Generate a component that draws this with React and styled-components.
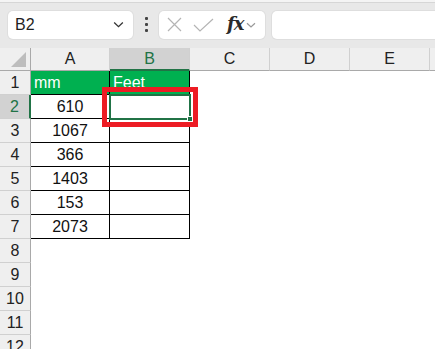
import React from 'react';
import styled, { createGlobalStyle } from 'styled-components';

const GlobalStyle = createGlobalStyle`
    html, body {
        margin: 0;
        padding: 0;
        background: #ffffff;
        overflow: hidden;
    }
    body {
        font-family: "Liberation Sans", Arial, sans-serif;
    }
`

const Page = styled.div`
    width: 435px;
    height: 349px;
    position: relative;
    overflow: hidden;
    background: #fff;
`

const TopEdge = styled.div`
    height: 2px;
    background: #f4f4f4;
    border-bottom: 1px solid #d6d6d6;
`

const Toolbar = styled.div`
    height: 45px;
    background: #e8e8e8;
    display: flex;
    align-items: center;
    padding-left: 8px;
    box-sizing: border-box;
    padding-bottom: 2px;
`

const Box = styled.div`
    height: 28px;
    background: #fff;
    border-radius: 5px;
    box-shadow: 0 0 0 1px #dedede;
    display: flex;
    align-items: center;
    box-sizing: border-box;
`

const NameBox = styled(Box)`
    width: 125px;
    padding: 0 8px 0 7px;
    justify-content: space-between;
    font-size: 16px;
    color: #1f1f1f;
`

const Dots = styled.div`
    width: 26px;
    display: flex;
    flex-direction: column;
    align-items: center;
    gap: 3px;

    & span {
        width: 3px;
        height: 3px;
        background: #444;
        border-radius: 1px;
    }
`

const FxBox = styled(Box)`
    width: 106px;
    padding: 0 3px 0 8px;
    gap: 11px;
`

const FxGroup = styled.span`
    display: flex;
    align-items: center;
    gap: 2px;
    margin-left: 2px;
`

const Fx = styled.span`
    font-family: "DejaVu Serif", "Liberation Serif", serif;
    font-style: italic;
    font-weight: bold;
    font-size: 18px;
    line-height: 22px;
    color: #2b2b2b;
    letter-spacing: -1px;
    margin-top: -2px;
`

const FormulaInput = styled(Box)`
    flex: 1;
    margin-left: 7px;
    border-radius: 5px 0 0 5px;
`

const Sheet = styled.div`
    display: grid;
    grid-template-columns: 31px 79px 80px 80px 80px 80px 1fr;
    grid-auto-rows: 24px;
    grid-template-rows: 23px;
`

const Corner = styled.div`
    background: #efefef;
    border-right: 1px solid #a9a9a9;
    border-bottom: 1px solid #a9a9a9;
    box-sizing: border-box;
    position: relative;

    &::after {
        content: '';
        position: absolute;
        right: 4px;
        bottom: 3px;
        width: 0;
        height: 0;
        border-left: 15px solid transparent;
        border-bottom: 15px solid #bdbdbd;
    }
`

const ColHead = styled.div`
    background: ${p => (p.$active ? '#d2d2d2' : '#efefef')};
    color: ${p => (p.$active ? '#217346' : '#222')};
    border-right: 1px solid #d0d0d0;
    border-bottom: ${p => (p.$active ? '2px solid #217346' : '1px solid #a9a9a9')};
    box-sizing: border-box;
    display: flex;
    align-items: center;
    justify-content: center;
    font-size: 16px;
    padding-top: ${p => (p.$active ? '1px' : '0')};
`

const RowHead = styled.div`
    background: ${p => (p.$active ? '#d2d2d2' : '#efefef')};
    color: ${p => (p.$active ? '#217346' : '#222')};
    border-right: ${p => (p.$active ? '2px solid #217346' : '1px solid #a9a9a9')};
    border-bottom: 1px solid #d0d0d0;
    box-sizing: border-box;
    display: flex;
    align-items: center;
    justify-content: center;
    font-size: 16px;
    padding-top: 1px;
`

const Cell = styled.div`
    box-sizing: border-box;
    background: ${p => (p.$head ? '#00b050' : '#fff')};
    color: ${p => (p.$head ? '#fff' : '#111')};
    border-right: ${p => (p.$boxed ? '1px solid #000' : 'none')};
    border-bottom: ${p => (p.$boxed ? '1px solid #000' : 'none')};
    display: flex;
    align-items: flex-end;
    justify-content: ${p => (p.$head ? 'flex-start' : 'center')};
    padding: 0 3px 3px;
    font-size: 16px;
    line-height: 16px;
    white-space: nowrap;
    overflow: hidden;
`

const Selection = styled.div`
    position: absolute;
    left: 109px;
    top: 94px;
    width: 82px;
    height: 26px;
    box-sizing: border-box;
    border: 2px solid #217346;

    &::after {
        content: '';
        position: absolute;
        right: -4px;
        bottom: -4px;
        width: 6px;
        height: 6px;
        background: #217346;
        border: 1px solid #fff;
        box-sizing: border-box;
    }
`

const Highlight = styled.div`
    position: absolute;
    left: 102px;
    top: 87px;
    width: 96px;
    height: 40px;
    box-sizing: border-box;
    border: 5px solid #ed1c24;
`

const values = [610, 1067, 366, 1403, 153, 2073];
const cols = ['A', 'B', 'C', 'D', 'E', 'F'];

function Chevron({ color = '#444', size = 12 }) {
    return (
        <svg width={size} height={size} viewBox="0 0 12 12">
            <path d="M2 4.2 L6 8 L10 4.2" fill="none" stroke={color} strokeWidth="1.2" />
        </svg>
    )
}

function App() {
    const rows = [];
    for (let r = 1; r <= 12; r++) {
        rows.push(<RowHead key={'h' + r} $active={r === 2}>{r}</RowHead>);
        if (r === 1) {
            rows.push(<Cell key="a1" $head $boxed>mm</Cell>);
            rows.push(<Cell key="b1" $head $boxed>Feet</Cell>);
        } else if (r <= 7) {
            rows.push(<Cell key={'a' + r} $boxed>{values[r - 2]}</Cell>);
            rows.push(<Cell key={'b' + r} $boxed></Cell>);
        } else {
            rows.push(<Cell key={'a' + r}></Cell>);
            rows.push(<Cell key={'b' + r}></Cell>);
        }
        for (let c = 2; c < 6; c++) {
            rows.push(<Cell key={r + '-' + c}></Cell>);
        }
    }

    return (
        <Page>
            <GlobalStyle />
            <TopEdge />
            <Toolbar>
                <NameBox>
                    <span>B2</span>
                    <Chevron color="#333" size={13} />
                </NameBox>
                <Dots><span /><span /><span /></Dots>
                <FxBox>
                    <svg width="15" height="15" viewBox="0 0 15 15">
                        <path d="M1 1 L14 14 M14 1 L1 14" stroke="#b4b4b4" strokeWidth="1.2" fill="none" />
                    </svg>
                    <svg width="21" height="14" viewBox="0 0 21 14">
                        <path d="M1 7 L7 13 L20 1" stroke="#b4b4b4" strokeWidth="1.2" fill="none" />
                    </svg>
                    <FxGroup>
                        <Fx>fx</Fx>
                        <Chevron color="#999" size={12} />
                    </FxGroup>
                </FxBox>
                <FormulaInput />
            </Toolbar>
            <Sheet>
                <Corner />
                {cols.map(c => (
                    <ColHead key={c} $active={c === 'B'}>{c === 'F' ? '' : c}</ColHead>
                ))}
                {rows}
            </Sheet>
            <Selection />
            <Highlight />
        </Page>
    )
}

export default App;
